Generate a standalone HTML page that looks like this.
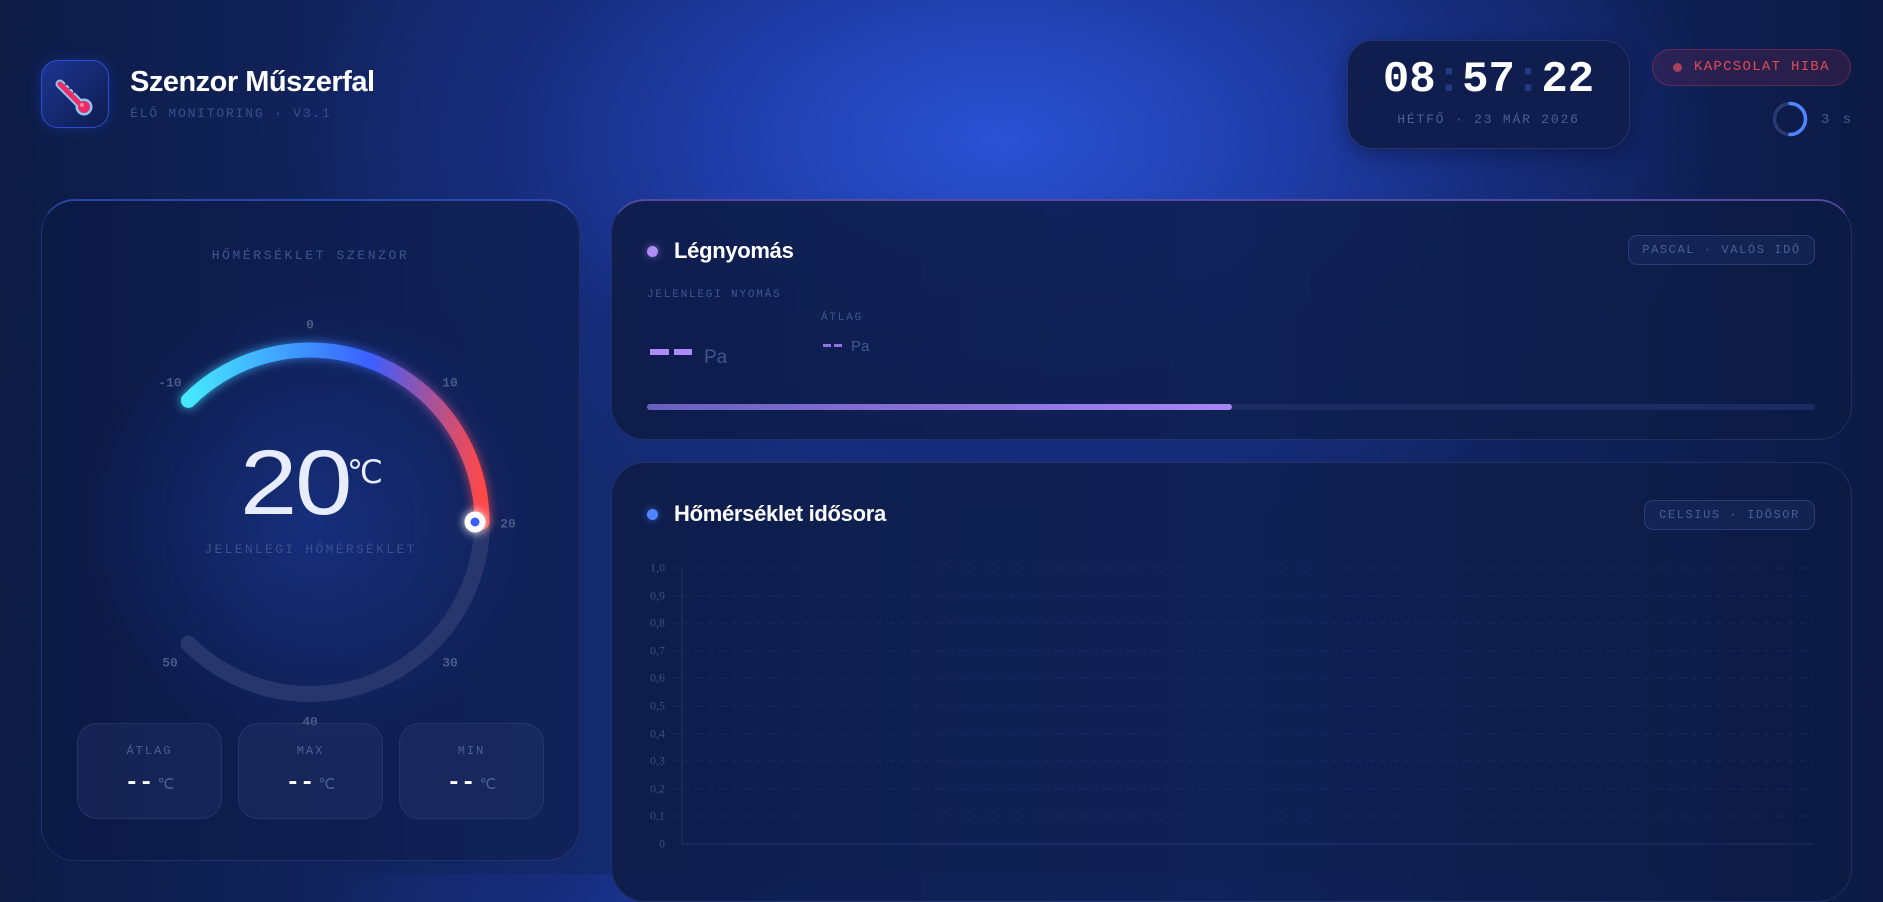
<!DOCTYPE html>
<html><head><meta charset="utf-8"><style>
*{margin:0;padding:0;box-sizing:border-box}
body{width:1883px;height:874px;overflow:hidden;position:relative;font-family:"Liberation Sans",sans-serif;
background:radial-gradient(ellipse 720px 420px at 1000px 140px,#2a52d4 0%,#1f3da8 40%,#162c7a 70%,rgba(14,28,80,0) 100%),linear-gradient(90deg,#0d1b45 0%,#16307f 45%,#152c78 60%,#0c1a44 100%);}
.a{position:absolute}
.mono{font-family:"Liberation Mono",monospace}
.card{position:absolute;background:linear-gradient(90deg,rgba(14,28,72,.92),rgba(16,32,82,.9),rgba(13,27,68,.95));border:1px solid rgba(90,110,180,.25);border-radius:34px}
.lbl{color:#3f5590;font-family:"Liberation Mono",monospace;letter-spacing:3px}
.badge{position:absolute;border:1px solid rgba(90,110,180,.35);background:rgba(40,60,120,.25);border-radius:9px;color:#4a5f96;font-family:"Liberation Mono",monospace;font-size:12px;letter-spacing:1.6px;display:flex;align-items:center;justify-content:center}
.stat{position:absolute;top:723px;width:145px;height:96px;border-radius:20px;background:rgba(40,55,110,.35);border:1px solid rgba(90,110,180,.2)}
.stat .t{position:absolute;top:20px;width:100%;text-align:center;color:#4a5f96;font-family:"Liberation Mono",monospace;font-size:12px;letter-spacing:2px}
.stat .v{position:absolute;top:46px;width:100%;text-align:center;color:#fff;font-family:"Liberation Mono",monospace;font-weight:bold;font-size:24px}
.stat .v span{font-family:"Liberation Sans",sans-serif;font-weight:normal;font-size:15px;color:#4a5f96}
.tk{position:absolute;font-family:"Liberation Mono",monospace;font-size:13px;color:#4a5a88;transform:translate(-50%,-50%);font-weight:bold}
.yl{position:absolute;right:1218px;font-family:"Liberation Serif",serif;font-size:12px;color:#3d4d80;transform:translateY(-50%)}
</style></head><body>

<div class="a" style="left:41px;top:60px;width:68px;height:68px;border-radius:17px;border:1px solid #2a4fd0;background:linear-gradient(135deg,#1d3592,#0e1c4f);box-shadow:0 0 14px rgba(40,80,220,.35)"></div>
<svg class="a" style="left:41px;top:60px" width="68" height="68" viewBox="0 0 68 68">
<line x1="19" y1="24" x2="38" y2="43" stroke="#8fc6ee" stroke-width="9" stroke-linecap="round"/>
<circle cx="43" cy="47" r="8.5" fill="#8fc6ee"/>
<line x1="19" y1="24" x2="38" y2="43" stroke="#ef2a66" stroke-width="5" stroke-linecap="round"/>
<circle cx="43" cy="47" r="6" fill="#ef2a66"/>
<circle cx="41" cy="45" r="2" fill="#ff8aa8"/>
<line x1="24" y1="25" x2="26" y2="23" stroke="#2a1f55" stroke-width="1.5"/>
<line x1="28" y1="29" x2="30" y2="27" stroke="#2a1f55" stroke-width="1.5"/>
<line x1="32" y1="33" x2="34" y2="31" stroke="#2a1f55" stroke-width="1.5"/>
</svg>
<div class="a" style="left:130px;top:66px;font-size:29px;font-weight:bold;color:#fff;letter-spacing:-.5px">Szenzor Műszerfal</div>
<div class="a mono" style="left:130px;top:106px;font-size:13px;color:#3a5090;letter-spacing:1.8px">ÉLŐ MONITORING · V3.1</div>

<div class="a" style="left:1347px;top:40px;width:283px;height:109px;border-radius:26px;background:#0f1e4e;border:1px solid rgba(90,110,180,.3);box-shadow:0 6px 20px rgba(5,10,40,.4)"></div>
<div class="a mono" style="left:1347px;top:55px;width:283px;text-align:center;font-size:44px;font-weight:bold;color:#fff;letter-spacing:0px">08<span style="color:#223a80">:</span>57<span style="color:#223a80">:</span>22</div>
<div class="a mono" style="left:1347px;top:112px;width:283px;text-align:center;font-size:13px;color:#4a5f96;letter-spacing:1.8px">HÉTFŐ · 23 MÁR 2026</div>

<div class="a" style="left:1652px;top:49px;width:199px;height:37px;border-radius:19px;background:rgba(110,40,80,.28);border:1px solid rgba(200,60,90,.35)"></div>
<div class="a" style="left:1673px;top:63px;width:9px;height:9px;border-radius:50%;background:#a8405e"></div>
<div class="a mono" style="left:1694px;top:59px;font-size:14px;color:#e04a55;letter-spacing:1.3px">KAPCSOLAT HIBA</div>
<svg class="a" style="left:1771px;top:100px" width="38" height="38"><circle cx="19" cy="19" r="15.5" fill="none" stroke="#2a3a70" stroke-width="3.5"/><path d="M19 3.5 A15.5 15.5 0 0 1 19 34.5" fill="none" stroke="#4f86ff" stroke-width="3.5" stroke-linecap="round"/></svg>
<div class="a mono" style="left:1821px;top:112px;font-size:14px;color:#4a5a88;letter-spacing:2.5px">3 s</div>

<div class="card" style="left:41px;top:199px;width:539px;height:662px;background:radial-gradient(circle 230px at 269px 323px,rgba(30,60,160,.55),rgba(14,30,80,0)),linear-gradient(90deg,rgba(13,26,70,.95),rgba(17,34,88,.92));border-top:2px solid rgba(60,100,230,.6)"></div>
<div class="a lbl" style="left:41px;top:248px;width:539px;text-align:center;font-size:13px;letter-spacing:2.6px">HŐMÉRSÉKLET SZENZOR</div>
<svg class="a" style="left:0;top:0" width="600" height="874">
<defs><linearGradient id="g" gradientUnits="userSpaceOnUse" x1="188" y1="0" x2="482" y2="0"><stop offset="0" stop-color="#45e8ff"/><stop offset=".62" stop-color="#3a5fff"/><stop offset="1" stop-color="#ff4848"/></linearGradient>
<filter id="b" x="-20%" y="-20%" width="140%" height="140%"><feGaussianBlur stdDeviation="5"/></filter></defs>
<path d="M482 522 A172 172 0 0 1 188.4 643.6" fill="none" stroke="#27376d" stroke-width="16" stroke-linecap="round"/>
<path d="M188.4 400.4 A172 172 0 0 1 482 522" fill="none" stroke="url(#g)" stroke-width="16" stroke-linecap="round" filter="url(#b)" opacity=".7"/>
<path d="M188.4 400.4 A172 172 0 0 1 482 522" fill="none" stroke="url(#g)" stroke-width="15" stroke-linecap="round"/>
<circle cx="475" cy="522" r="10.5" fill="#fff" style="filter:drop-shadow(0 0 5px #fff)"/>
<circle cx="475" cy="522" r="4.5" fill="#3a5fff"/>
</svg>
<div class="tk" style="left:310px;top:325px">0</div>
<div class="tk" style="left:170px;top:383px">-10</div>
<div class="tk" style="left:450px;top:383px">10</div>
<div class="tk" style="left:508px;top:524px">20</div>
<div class="tk" style="left:450px;top:663px">30</div>
<div class="tk" style="left:170px;top:663px">50</div>
<div class="tk" style="left:310px;top:722px">40</div>
<div class="a" style="left:240px;top:438px;font-size:92px;color:#e8ecff;font-weight:300;letter-spacing:-2px;line-height:90px;transform:scaleX(1.12);transform-origin:left top">20</div>
<div class="a" style="left:347px;top:452px;font-size:32px;color:#e8ecff;line-height:40px;letter-spacing:-3px">℃</div>
<div class="a lbl" style="left:41px;top:542px;width:539px;text-align:center;font-size:13px;color:#3a5090;letter-spacing:2.3px">JELENLEGI HŐMÉRSÉKLET</div>
<div class="stat" style="left:77px"><div class="t">ÁTLAG</div><div class="v">--<span> ℃</span></div></div>
<div class="stat" style="left:238px"><div class="t">MAX</div><div class="v">--<span> ℃</span></div></div>
<div class="stat" style="left:399px"><div class="t">MIN</div><div class="v">--<span> ℃</span></div></div>

<div class="card" style="left:611px;top:199px;width:1241px;height:241px;border-top:2px solid rgba(140,110,230,.55)"></div>
<div class="a" style="left:647px;top:246px;width:11px;height:11px;border-radius:50%;background:#b08cf6;box-shadow:0 0 8px rgba(176,140,246,.6)"></div>
<div class="a" style="left:674px;top:238px;font-size:22px;font-weight:bold;color:#fff;letter-spacing:-.3px">Légnyomás</div>
<div class="badge" style="left:1628px;top:235px;width:187px;height:30px">PASCAL · VALÓS IDŐ</div>
<div class="a lbl" style="left:647px;top:289px;font-size:11px;letter-spacing:1.8px">JELENLEGI NYOMÁS</div>
<div class="a lbl" style="left:821px;top:312px;font-size:11px;letter-spacing:1.8px">ÁTLAG</div>
<div class="a" style="left:650px;top:349px;width:19px;height:6px;background:#a98af7"></div>
<div class="a" style="left:674px;top:349px;width:18px;height:6px;background:#a98af7"></div>
<div class="a" style="left:704px;top:347px;font-size:19px;color:#3f5590">Pa</div>
<div class="a" style="left:823px;top:344px;width:8px;height:3px;background:#8f72e6"></div>
<div class="a" style="left:834px;top:344px;width:8px;height:3px;background:#8f72e6"></div>
<div class="a" style="left:851px;top:338px;font-size:15px;color:#3f5590">Pa</div>
<div class="a" style="left:647px;top:404px;width:1168px;height:6px;border-radius:3px;background:#1c2b62"></div>
<div class="a" style="left:647px;top:404px;width:585px;height:6px;border-radius:3px;background:linear-gradient(90deg,#6a60c0,#a884f5)"></div>

<div class="card" style="left:611px;top:462px;width:1241px;height:440px"></div>
<div class="a" style="left:647px;top:509px;width:11px;height:11px;border-radius:50%;background:#4f86ff;box-shadow:0 0 8px rgba(79,134,255,.6)"></div>
<div class="a" style="left:674px;top:501px;font-size:22px;font-weight:bold;color:#fff;letter-spacing:-.3px">Hőmérséklet idősora</div>
<div class="badge" style="left:1644px;top:500px;width:171px;height:30px">CELSIUS · IDŐSOR</div>
<svg class="a" style="left:0;top:0" width="1883" height="874">
<g stroke="#1e2d66" stroke-width="1" stroke-dasharray="6 6" opacity=".8">
<line x1="672" y1="568" x2="1813" y2="568"/><line x1="672" y1="596" x2="1813" y2="596"/><line x1="672" y1="623" x2="1813" y2="623"/><line x1="672" y1="651" x2="1813" y2="651"/><line x1="672" y1="678" x2="1813" y2="678"/><line x1="672" y1="706" x2="1813" y2="706"/><line x1="672" y1="734" x2="1813" y2="734"/><line x1="672" y1="761" x2="1813" y2="761"/><line x1="672" y1="789" x2="1813" y2="789"/><line x1="672" y1="816" x2="1813" y2="816"/></g>
<line x1="682" y1="568" x2="682" y2="844" stroke="#223268"/>
<line x1="682" y1="844" x2="1813" y2="844" stroke="#223268"/>
</svg>
<div class="yl" style="top:568px">1,0</div><div class="yl" style="top:596px">0,9</div><div class="yl" style="top:623px">0,8</div><div class="yl" style="top:651px">0,7</div><div class="yl" style="top:678px">0,6</div><div class="yl" style="top:706px">0,5</div><div class="yl" style="top:734px">0,4</div><div class="yl" style="top:761px">0,3</div><div class="yl" style="top:789px">0,2</div><div class="yl" style="top:816px">0,1</div><div class="yl" style="top:844px">0</div>
</body></html>
